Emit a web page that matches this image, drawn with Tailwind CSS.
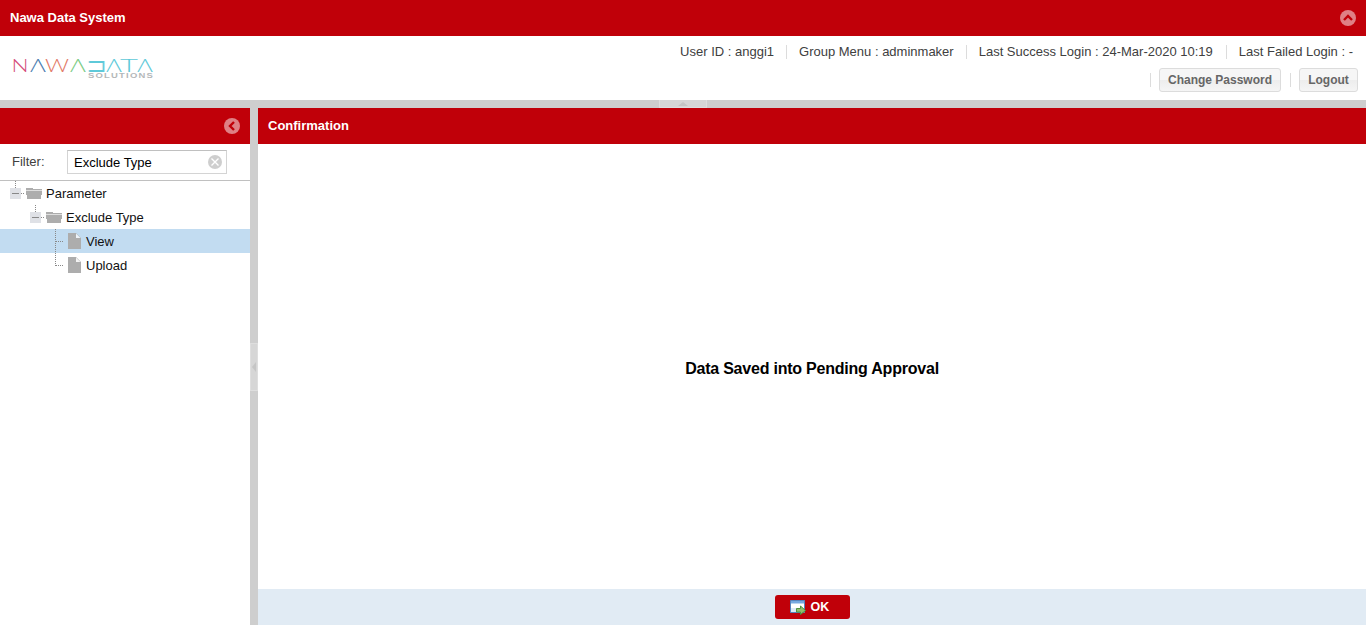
<!DOCTYPE html>
<html lang="en">
<head>
<meta charset="utf-8">
<title>Nawa Data System</title>
<script src="https://cdn.jsdelivr.net/npm/@tailwindcss/browser@4"></script>
</head>
<body class="w-[1366px] h-[625px] overflow-hidden bg-white flex flex-col font-['Liberation_Sans',Arial,sans-serif] text-[13px] leading-[17px] text-[#404040]">
<header class="h-9 shrink-0 bg-[#c00009] flex items-center justify-between pl-2.5 pr-2.5 text-white font-bold">
  <h1 class="pb-px">Nawa Data System</h1>
  <svg class="w-4 h-4" viewBox="0 0 16 16"><circle cx="8" cy="8" r="8" fill="#df8085"/><path d="M4 10l4-4 4 4" fill="none" stroke="#c00009" stroke-width="2.4"/></svg>
</header>
<section class="h-16 shrink-0 flex justify-between">
  <svg class="w-[170px] h-16" viewBox="0 36 170 64" aria-label="NAWADATA SOLUTIONS" font-family="Lato, sans-serif" font-weight="300" font-size="17">
    <text x="11.500" y="71.500" textLength="17" lengthAdjust="spacingAndGlyphs" fill="#d54a78">N</text>
    <text x="30" y="71.500" textLength="16" lengthAdjust="spacingAndGlyphs" fill="#4b7db0">Λ</text>
    <text x="45" y="71.500" textLength="24" lengthAdjust="spacingAndGlyphs" fill="#e27866">W</text>
    <text x="70" y="71.500" textLength="16" lengthAdjust="spacingAndGlyphs" fill="#7acb83">Λ</text>
    <text x="86" y="71.500" textLength="21" lengthAdjust="spacingAndGlyphs" font-size="18" fill="#5ec9d9" stroke="#fff" stroke-width=".2">⊐</text>
    <text x="106" y="71.500" textLength="16" lengthAdjust="spacingAndGlyphs" fill="#5ec9d9">Λ</text>
    <text x="120" y="71.500" textLength="18" lengthAdjust="spacingAndGlyphs" fill="#5ec9d9">T</text>
    <text x="137" y="71.500" textLength="16" lengthAdjust="spacingAndGlyphs" fill="#5ec9d9">Λ</text>
    <text x="88" y="78" textLength="66" lengthAdjust="spacingAndGlyphs" letter-spacing=".9" font-family="Liberation Sans, sans-serif" font-size="7" font-weight="700" fill="#b4b7b9">SOLUTIONS</text>
  </svg>
  <div class="flex flex-col items-end">
    <div class="flex items-center pt-[7px] pr-[13px] whitespace-nowrap">
      <span>User ID : anggi1</span><i class="w-px h-3.5 bg-[#dcdcdc] mx-3"></i>
      <span>Group Menu : adminmaker</span><i class="w-px h-3.5 bg-[#dcdcdc] mx-3"></i>
      <span>Last Success Login : 24-Mar-2020 10:19</span><i class="w-px h-3.5 bg-[#dcdcdc] ml-[13px] mr-3"></i>
      <span>Last Failed Login : -</span>
    </div>
    <div class="flex items-center mt-2 pr-2 font-bold text-[12px] text-[#666]">
      <i class="w-px h-3.5 bg-[#dcdcdc] mr-2"></i>
      <button class="w-[122px] h-6 border border-[#dcdcdc] rounded-[3px] bg-linear-to-b from-[#f6f6f6] from-50% via-[#ededed] via-50% to-[#f5f5f5]">Change Password</button>
      <i class="w-px h-3.5 bg-[#dcdcdc] ml-[9px] mr-2"></i>
      <button class="w-[59px] h-6 border border-[#dcdcdc] rounded-[3px] bg-linear-to-b from-[#f6f6f6] from-50% via-[#ededed] via-50% to-[#f5f5f5]">Logout</button>
    </div>
  </div>
</section>
<div class="h-2 shrink-0 bg-[#cecece] flex justify-center">
  <div class="w-12 h-2 bg-[#d6d6d6] border border-[#dedede] border-t-0 flex justify-center">
    <svg class="w-3 h-2" viewBox="0 0 12 8"><path d="M1 6l5-4 5 4z" fill="#c5c5c5"/></svg>
  </div>
</div>
<div class="flex flex-1 min-h-0">
  <aside class="w-[250px] shrink-0 flex flex-col">
    <div class="h-9 bg-[#c00009] flex items-center justify-end pr-2.5">
      <svg class="w-4 h-4" viewBox="0 0 16 16"><circle cx="8" cy="8" r="8" fill="#df8085"/><path d="M10 4l-4 4 4 4" fill="none" stroke="#c00009" stroke-width="2.4"/></svg>
    </div>
    <div class="h-[37px] border-b border-[#c0c0c0] flex items-center pl-3">
      <label class="w-[55px] pb-0.5">Filter:</label>
      <div class="w-40 h-6 border border-[#d4d4d4] border-t-[#c0c0c0] flex items-center justify-between pl-1.5 pr-1 text-black">
        <span class="pt-px">Exclude Type</span>
        <svg class="w-3.5 h-3.5" viewBox="0 0 14 14"><circle cx="7" cy="7" r="7" fill="#cecece"/><path d="M3.500 3.500l7 7m0-7l-7 7" stroke="#fff" stroke-width="1.4"/></svg>
      </div>
    </div>
    <ul class="text-[#111]">
      <li class="h-6 flex items-center">
        <svg class="w-[46px] h-6" viewBox="0 0 46 24" shape-rendering="crispEdges"><path d="M15.500 0v7M21 12.500h4" stroke="#888" stroke-dasharray="1 1"/><path d="M10 7h11v11h-11z" fill="#dfe1e6"/><path d="M12 12.500h7" stroke="#888"/><path d="M26 7h6l2 1h8v1h-16z" fill="#adadad"/><path d="M26 9h16v1h-16z" fill="#dedede"/><path d="M26 10h16l-1 8h-14z" fill="#adadad"/></svg><span>Parameter</span>
      </li>
      <li class="h-6 flex items-center">
        <svg class="w-[66px] h-6" viewBox="0 0 66 24" shape-rendering="crispEdges"><path d="M35.500 0v7M41 12.500h4" stroke="#888" stroke-dasharray="1 1"/><path d="M30 7h11v11h-11z" fill="#dfe1e6"/><path d="M32 12.500h7" stroke="#888"/><path d="M46 7h6l2 1h8v1h-16z" fill="#adadad"/><path d="M46 9h16v1h-16z" fill="#dedede"/><path d="M46 10h16l-1 8h-14z" fill="#adadad"/></svg><span>Exclude Type</span>
      </li>
      <li class="h-6 flex items-center bg-[#c2dcf1]">
        <svg class="w-[86px] h-6" viewBox="0 0 86 24"><path d="M55.500 0v24M56 12.500h8" stroke="#888" stroke-dasharray="1 1" shape-rendering="crispEdges"/><path d="M68 4h8l5 5v11h-13z" fill="#adadad"/><path d="M76 4.500v4.500h4.500z" fill="#eef4fa"/></svg><span>View</span>
      </li>
      <li class="h-6 flex items-center">
        <svg class="w-[86px] h-6" viewBox="0 0 86 24"><path d="M55.500 0v13M56 12.500h8" stroke="#888" stroke-dasharray="1 1" shape-rendering="crispEdges"/><path d="M68 4h8l5 5v11h-13z" fill="#adadad"/><path d="M76 4.500v4.500h4.500z" fill="#f4f4f4"/></svg><span>Upload</span>
      </li>
    </ul>
  </aside>
  <div class="w-2 shrink-0 bg-[#cecece] flex items-center">
    <div class="w-2 h-12 bg-[#d6d6d6] border border-[#dedede] flex items-center justify-center">
      <svg class="w-1.5 h-3" viewBox="0 0 6 12"><path d="M5 1l-4 5 4 5z" fill="#c5c5c5"/></svg>
    </div>
  </div>
  <main class="flex-1 flex flex-col">
    <h2 class="h-9 bg-[#c00009] text-white font-bold flex items-center pl-2.5 pb-px">Confirmation</h2>
    <div class="flex-1 flex items-center justify-center text-black font-bold text-[16px] leading-5 tracking-[-0.22px] pt-1">Data Saved into Pending Approval</div>
    <footer class="h-9 bg-[#e1ebf4] flex items-center justify-center">
      <button class="w-[75px] h-6 rounded-[3px] bg-[#c00009] text-white font-bold text-[12.5px] flex items-center pl-[15px] gap-[5px]">
        <svg class="w-4 h-4" viewBox="0 0 16 16"><path d="M.5 1.500h14v12h-14z" fill="#fff" stroke="#5583bd"/><path d="M1 2h13v2.500H1z" fill="#76a8e0"/><path d="M1 9h8v4H1z" fill="#dce9f5"/><path d="M6.500 9.500h4v-2.500l5 4.500-5 4v-2.500h-4z" fill="#8fbe6c" stroke="#4f9040"/></svg>
        <span>OK</span>
      </button>
    </footer>
  </main>
</div>
</body>
</html>
